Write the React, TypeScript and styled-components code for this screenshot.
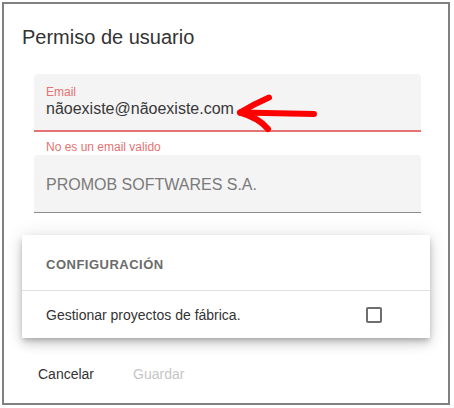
import React from "react";
import styled, { createGlobalStyle } from "styled-components";

const GlobalStyle = createGlobalStyle`
  body {
    margin: 0;
    background: #ffffff;
    font-family: "Liberation Sans", Arial, sans-serif;
  }
`;

const Frame = styled.div`
  position: relative;
  box-sizing: border-box;
  width: 448px;
  height: 403px;
  margin: 2px 0 0 2px;
  border: 2px solid #808080;
  background: #ffffff;
`;

const Title = styled.h2`
  margin: 0;
  padding: 21px 18px 0;
  font-size: 20px;
  font-weight: 400;
  line-height: 24px;
  color: #333333;
`;

const Content = styled.div`
  padding: 0 18px;
`;

const Fields = styled.div`
  margin: 25px 9px 0 12px;
`;

const Field = styled.div<{ $error?: boolean }>`
  box-sizing: border-box;
  height: 58px;
  padding: ${(p) => (p.$error ? "11px 12px 0" : "0 12px")};
  background: #f4f4f4;
  border-radius: 4px 4px 0 0;
  border-bottom: ${(p) => (p.$error ? "2px solid #e57373" : "1px solid #8c8c8c")};
  display: flex;
  flex-direction: column;
  justify-content: ${(p) => (p.$error ? "flex-start" : "center")};
`;

const Label = styled.label`
  font-size: 12px;
  line-height: 14px;
  color: #e57373;
`;

const Value = styled.div<{ $placeholder?: boolean }>`
  margin-top: ${(p) => (p.$placeholder ? 2 : 1)}px;
  font-size: 16px;
  line-height: 18px;
  color: ${(p) => (p.$placeholder ? "#7a7a7a" : "#383838")};
`;

const Helper = styled.div`
  margin: 8px 0 1px;
  padding-left: 12px;
  font-size: 12px;
  line-height: 14px;
  color: #e57373;
`;

const Card = styled.div`
  margin-top: 22px;
  background: #ffffff;
  box-shadow: 0 3px 5px -1px rgba(0, 0, 0, 0.2), 0 6px 10px 0 rgba(0, 0, 0, 0.14),
    0 1px 18px 0 rgba(0, 0, 0, 0.12);
`;

const CardHeader = styled.div`
  box-sizing: border-box;
  height: 56px;
  padding: 4px 24px 0;
  display: flex;
  align-items: center;
  border-bottom: 1px solid #e0e0e0;
  font-size: 13px;
  font-weight: 700;
  letter-spacing: 0.5px;
  color: #6b6b6b;
`;

const CardRow = styled.div`
  height: 47px;
  padding: 0 48px 0 24px;
  display: flex;
  align-items: center;
  justify-content: space-between;
  font-size: 14px;
  color: #333333;
`;

const Checkbox = styled.span`
  box-sizing: border-box;
  width: 16px;
  height: 16px;
  border: 2px solid #6e6e6e;
  border-radius: 2px;
  margin-top: 1px;
`;

const Actions = styled.div`
  display: flex;
  gap: 39px;
  margin-top: 28px;
  padding-left: 34px;
`;

const ActionButton = styled.button<{ $disabled?: boolean }>`
  padding: 0;
  border: none;
  background: none;
  font-family: "Liberation Sans", Arial, sans-serif;
  font-size: 14px;
  line-height: 16px;
  color: ${(p) => (p.$disabled ? "#c6c6c6" : "#333333")};
`;

// hand-drawn annotation arrow pointing at the email value
const Arrow = styled.svg`
  position: absolute;
  left: 226px;
  top: 86px;
`;

export default function App() {
  return (
    <>
      <GlobalStyle />
      <Frame>
        <Title>Permiso de usuario</Title>
        <Content>
          <Fields>
            <Field $error>
              <Label>Email</Label>
              <Value>nãoexiste@nãoexiste.com</Value>
            </Field>
            <Helper>No es un email valido</Helper>
            <Field>
              <Value $placeholder>PROMOB SOFTWARES S.A.</Value>
            </Field>
          </Fields>
          <Card>
            <CardHeader>CONFIGURACIÓN</CardHeader>
            <CardRow>
              <span>Gestionar proyectos de fábrica.</span>
              <Checkbox />
            </CardRow>
          </Card>
        </Content>
        <Actions>
          <ActionButton>Cancelar</ActionButton>
          <ActionButton $disabled>Guardar</ActionButton>
        </Actions>
        <Arrow width="95" height="45" viewBox="0 0 95 45" fill="none">
          <path
            d="M11 22.5 C 35 23, 60 23.5, 84 24"
            stroke="#ff0000"
            strokeWidth="6"
            strokeLinecap="round"
          />
          <path
            d="M39 7.5 Q 24 14, 10 22.5"
            stroke="#ff0000"
            strokeWidth="6"
            strokeLinecap="round"
          />
          <path
            d="M10 22.5 Q 29 28, 38 39"
            stroke="#ff0000"
            strokeWidth="6"
            strokeLinecap="round"
          />
        </Arrow>
      </Frame>
    </>
  );
}
